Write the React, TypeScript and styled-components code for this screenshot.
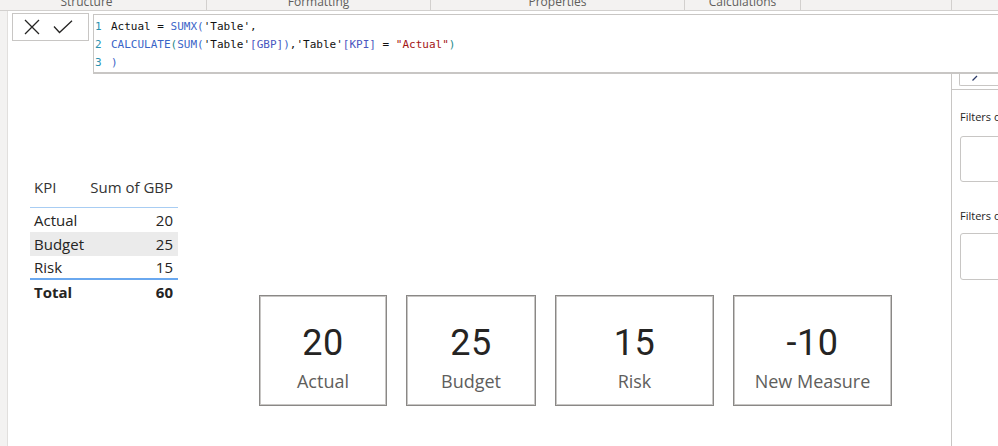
import React from 'react';
import styled, { createGlobalStyle } from 'styled-components';

const GlobalStyle = createGlobalStyle`
  html, body {
    margin: 0;
    padding: 0;
    background: #ffffff;
  }
  body {
    width: 998px;
    height: 446px;
    overflow: hidden;
    font-family: 'Open Sans', 'Noto Sans', sans-serif;
    color: #252423;
  }
  #root {
    height: 100%;
  }
`;

const ribbonGroups = [
  { label: 'Structure', width: 207, padRight: 33 },
  { label: 'Formatting', width: 224, padRight: 0 },
  { label: 'Properties', width: 254, padRight: 0 },
  { label: 'Calculations', width: 116, padRight: 0 },
  { label: '', width: 151, padRight: 0 },
];

const tableRows = [
  { kpi: 'Actual', value: 20 },
  { kpi: 'Budget', value: 25, shaded: true },
  { kpi: 'Risk', value: 15, last: true },
];

const cards = [
  { value: '20', label: 'Actual', width: 128 },
  { value: '25', label: 'Budget', width: 130 },
  { value: '15', label: 'Risk', width: 159 },
  { value: '-10', label: 'New Measure', width: 159 },
];

const Page = styled.div`
  width: 998px;
  height: 446px;
  display: flex;
  flex-direction: column;
  overflow: hidden;
`;

const Ribbon = styled.div`
  height: 10px;
  display: flex;
  align-items: flex-end;
  overflow: hidden;
  background: #f3f2f1;
  border-bottom: 1px solid #d2d0ce;
`;

const RibbonGroup = styled.div<{ $w: number; $padRight: number }>`
  flex: 0 0 ${p => p.$w}px;
  box-sizing: border-box;
  height: 10px;
  padding-right: ${p => p.$padRight}px;
  border-right: 1px solid #d2d0ce;
  display: flex;
  justify-content: center;
  align-items: flex-end;
  overflow: visible;
`;

const RibbonLabel = styled.span`
  font-size: 12px;
  line-height: 16px;
  height: 16px;
  color: #605e5c;
  white-space: nowrap;
`;

const Body = styled.div`
  flex: 1;
  display: flex;
  min-height: 0;
`;

const LeftRail = styled.div`
  width: 7px;
  background: #f3f2f1;
  border-right: 1px solid #e1dfdd;
`;

const Main = styled.div`
  flex: 1;
  display: flex;
  flex-direction: column;
  min-width: 0;
`;

const FormulaRow = styled.div`
  display: flex;
  align-items: flex-start;
  padding: 2px 0 0 4px;
  gap: 4px;
`;

const CommitBox = styled.div`
  width: 77px;
  height: 28px;
  box-sizing: border-box;
  border: 1px solid #c8c6c4;
  background: #fff;
  display: flex;
  align-items: center;
  padding-left: 11px;
  gap: 13px;
`;

const Editor = styled.div`
  flex: 1;
  height: 60px;
  box-sizing: border-box;
  margin-top: 1px;
  margin-right: -12px;
  border: 1px solid #c8c6c4;
  border-bottom: 2px solid #c8c6c4;
  background: #fff;
  padding: 3px 0 0 1px;
  font-family: 'DejaVu Sans Mono', 'Liberation Mono', monospace;
  font-size: 11px;
`;

const CodeLine = styled.div`
  display: flex;
  height: 18px;
  line-height: 18px;
  white-space: pre;
`;

const LineNo = styled.span`
  width: 16px;
  color: #2b91af;
`;

type TokenKind = 'plain' | 'fn' | 'p1' | 'p2' | 'col' | 'str';

const tokenColors: Record<TokenKind, string> = {
  plain: '#111111',
  fn: '#3a65c8',
  p1: '#3a65c8',
  p2: '#1f8a8a',
  col: '#4a56c0',
  str: '#a31515',
};

const Token = styled.span<{ $kind: TokenKind }>`
  color: ${p => tokenColors[p.$kind]};
`;

const Workspace = styled.div`
  flex: 1;
  display: flex;
  min-height: 0;
`;

const Canvas = styled.div`
  flex: 1;
  display: flex;
  align-items: flex-start;
  padding-left: 22px;
  background: #fff;
`;

const MatrixTable = styled.div`
  margin-top: 101px;
  width: 148px;
  display: flex;
  flex-direction: column;
  font-size: 15px;
`;

const TableRow = styled.div<{ $header?: boolean; $shaded?: boolean; $last?: boolean; $total?: boolean }>`
  display: grid;
  grid-template-columns: 58px 90px;
  line-height: ${p => (p.$last ? 22 : 24)}px;
  padding-bottom: ${p => (p.$header ? 8 : 0)}px;
  background: ${p => (p.$shaded ? '#ebebeb' : 'transparent')};
  color: ${p => (p.$header ? '#333333' : '#252423')};
  font-weight: ${p => (p.$total ? 700 : 400)};
  border-bottom: ${p =>
    p.$header ? '1px solid #a8cdf3' : p.$last ? '2px solid #6aa8ef' : 'none'};
`;

const KpiCell = styled.span`
  padding-left: 4px;
  white-space: nowrap;
`;

const ValueCell = styled.span`
  padding-right: 5px;
  text-align: right;
  white-space: nowrap;
`;

const CardRow = styled.div`
  margin: 221px 0 0 81px;
  display: flex;
  gap: 19px;
`;

const Card = styled.div<{ $w: number }>`
  width: ${p => p.$w}px;
  height: 111px;
  box-sizing: border-box;
  border: 1px solid #8a8886;
  box-shadow: inset 0 0 0 1px #c8c6c4;
  display: flex;
  flex-direction: column;
  align-items: center;
  padding-top: 25px;
`;

const CardValue = styled.div`
  font-family: Roboto, 'DejaVu Sans', sans-serif;
  font-size: 36px;
  line-height: 44px;
  color: #252423;
  letter-spacing: 0.5px;
`;

const CardLabel = styled.div`
  margin-top: 4px;
  font-size: 18px;
  line-height: 24px;
  color: #605e5c;
  white-space: nowrap;
`;

const RightPane = styled.div`
  width: 46px;
  border-left: 1px solid #c8c6c4;
  overflow: hidden;
  display: flex;
  flex-direction: column;
`;

const PaneTop = styled.div`
  height: 15px;
  border-bottom: 1px solid #c8c6c4;
  padding-left: 7px;
`;

const PaneButton = styled.div`
  width: 60px;
  height: 12px;
  border-left: 1px solid #c8c6c4;
  border-bottom: 1px solid #c8c6c4;
  border-bottom-left-radius: 2px;
  padding: 1px 0 0 12px;
  box-sizing: border-box;
  display: flex;
  align-items: flex-start;
`;

const FilterSection = styled.div<{ $top: number }>`
  margin-top: ${p => p.$top}px;
  padding-left: 8px;
`;

const FilterLabel = styled.div`
  font-size: 11px;
  line-height: 16px;
  color: #252423;
  white-space: nowrap;
`;

const FilterWell = styled.div<{ $gap: number; $h: number }>`
  margin-top: ${p => p.$gap}px;
  width: 80px;
  height: ${p => p.$h}px;
  box-sizing: border-box;
  border: 1px solid #c8c6c4;
  border-radius: 3px;
`;

const CloseIcon = () => (
  <svg width="16" height="16" viewBox="0 0 16 16">
    <path d="M1 1 L15 15 M15 1 L1 15" stroke="#252423" strokeWidth="1.3" fill="none" />
  </svg>
);

const CheckIcon = () => (
  <svg width="20" height="14" viewBox="0 0 20 14">
    <path d="M1 6.5 L6.5 12.5 L19 0.8" stroke="#252423" strokeWidth="1.3" fill="none" />
  </svg>
);

const PencilIcon = () => (
  <svg width="6" height="6" viewBox="0 0 6 6" style={{ display: 'block' }}>
    <path d="M0.5 5.5 L5 1" stroke="#2b3a67" strokeWidth="1.2" fill="none" />
  </svg>
);

const App: React.FC = () => {
  return (
    <>
      <GlobalStyle />
      <Page>
        <Ribbon>
          {ribbonGroups.map((g, i) => (
            <RibbonGroup key={i} $w={g.width} $padRight={g.padRight}>
              {g.label && <RibbonLabel>{g.label}</RibbonLabel>}
            </RibbonGroup>
          ))}
        </Ribbon>
        <Body>
          <LeftRail />
          <Main>
            <FormulaRow>
              <CommitBox>
                <CloseIcon />
                <CheckIcon />
              </CommitBox>
              <Editor>
                <CodeLine>
                  <LineNo>1</LineNo>
                  <Token $kind="plain">Actual = </Token>
                  <Token $kind="fn">SUMX</Token>
                  <Token $kind="p1">(</Token>
                  <Token $kind="plain">'Table',</Token>
                </CodeLine>
                <CodeLine>
                  <LineNo>2</LineNo>
                  <Token $kind="fn">CALCULATE</Token>
                  <Token $kind="p2">(</Token>
                  <Token $kind="fn">SUM</Token>
                  <Token $kind="p1">(</Token>
                  <Token $kind="plain">'Table'</Token>
                  <Token $kind="col">[GBP]</Token>
                  <Token $kind="p1">)</Token>
                  <Token $kind="plain">,'Table'</Token>
                  <Token $kind="col">[KPI]</Token>
                  <Token $kind="plain"> = </Token>
                  <Token $kind="str">"Actual"</Token>
                  <Token $kind="p2">)</Token>
                </CodeLine>
                <CodeLine>
                  <LineNo>3</LineNo>
                  <Token $kind="p1">)</Token>
                </CodeLine>
              </Editor>
            </FormulaRow>
            <Workspace>
              <Canvas>
                <MatrixTable>
                  <TableRow $header>
                    <KpiCell>KPI</KpiCell>
                    <ValueCell>Sum of GBP</ValueCell>
                  </TableRow>
                  {tableRows.map(r => (
                    <TableRow key={r.kpi} $shaded={r.shaded} $last={r.last}>
                      <KpiCell>{r.kpi}</KpiCell>
                      <ValueCell>{r.value}</ValueCell>
                    </TableRow>
                  ))}
                  <TableRow $total>
                    <KpiCell>Total</KpiCell>
                    <ValueCell>60</ValueCell>
                  </TableRow>
                </MatrixTable>
                <CardRow>
                  {cards.map(c => (
                    <Card key={c.label} $w={c.width}>
                      <CardValue>{c.value}</CardValue>
                      <CardLabel>{c.label}</CardLabel>
                    </Card>
                  ))}
                </CardRow>
              </Canvas>
              <RightPane>
                <PaneTop>
                  <PaneButton>
                    <PencilIcon />
                  </PaneButton>
                </PaneTop>
                <FilterSection $top={19}>
                  <FilterLabel>Filters on this page</FilterLabel>
                  <FilterWell $gap={11} $h={46} />
                </FilterSection>
                <FilterSection $top={26}>
                  <FilterLabel>Filters on all pages</FilterLabel>
                  <FilterWell $gap={9} $h={47} />
                </FilterSection>
              </RightPane>
            </Workspace>
          </Main>
        </Body>
      </Page>
    </>
  );
};

export default App;
